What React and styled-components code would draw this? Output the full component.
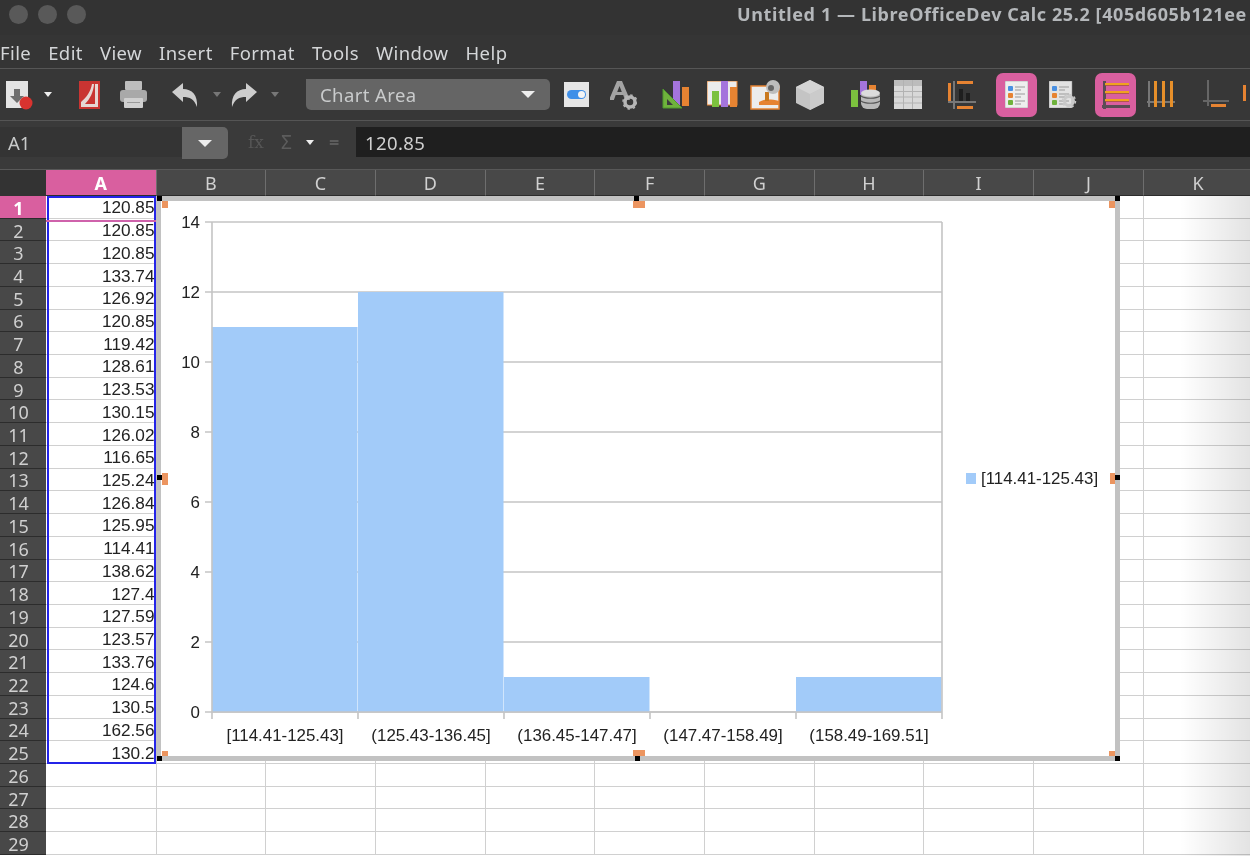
import styled, { createGlobalStyle } from "styled-components";

const GlobalStyle = createGlobalStyle`
  html, body {
    margin: 0;
    padding: 0;
    background: #333;
    overflow: hidden;
  }
`;

const uiFont = `"Noto Sans", "Open Sans", sans-serif`;
const cellFont = `"Liberation Sans", Arial, sans-serif`;

const Page = styled.div`
  width: 1250px;
  height: 856px;
  overflow: hidden;
  background: #363636;
  font-family: ${uiFont};
  filter: blur(0.45px);
`;

const TitleBar = styled.div`
  height: 35px;
  display: flex;
  align-items: flex-start;
  background: #333;
  padding: 5px 0 0 9px;
  box-sizing: border-box;
  gap: 10px;
  white-space: nowrap;
  overflow: hidden;
`;

const WindowDot = styled.span`
  width: 19px;
  height: 19px;
  border-radius: 50%;
  background: #595959;
  flex: none;
`;

const WindowTitle = styled.span`
  margin: -3px 0 0 641px;
  font-size: 18px;
  font-weight: 700;
  letter-spacing: 0.6px;
  color: #b4b7ba;
`;

const MenuBar = styled.div`
  height: 34px;
  box-sizing: border-box;
  display: flex;
  align-items: center;
  gap: 17px;
  padding: 1px 0 0 0;
  background: #353535;
  border-bottom: 1px solid #565656;
`;

const MenuItem = styled.span`
  font-size: 18.5px;
  letter-spacing: 0.4px;
  color: #d4d6d8;
`;

const ToolBar = styled.div`
  height: 52px;
  box-sizing: border-box;
  display: flex;
  align-items: center;
  background: #373737;
  border-bottom: 1px solid #555;
  overflow: hidden;
`;

const ToolIcon = styled.svg`
  flex: none;
  display: block;
  margin-left: ${(p) => p.$ml || 0}px;
`;

const PinkButton = styled.div`
  flex: none;
  width: 41px;
  height: 44px;
  margin-left: ${(p) => p.$ml || 0}px;
  border-radius: 7px;
  background: #d95f9f;
  display: flex;
  align-items: center;
  justify-content: center;
`;

const Caret = styled.span`
  flex: none;
  width: 0;
  height: 0;
  margin-left: ${(p) => p.$ml || 0}px;
  border-left: 4.5px solid transparent;
  border-right: 4.5px solid transparent;
  border-top: 5px solid ${(p) => p.$color || "#eee"};
`;

const Combo = styled.div`
  flex: none;
  width: 244px;
  height: 31px;
  margin-left: ${(p) => p.$ml}px;
  box-sizing: border-box;
  padding: 0 15px 0 14px;
  display: flex;
  align-items: center;
  justify-content: space-between;
  border-radius: 0 5px 5px 5px;
  background: #656565;
  color: #c9cbcc;
  font-size: 18.5px;
  letter-spacing: 0.4px;
`;

const ComboCaret = styled(Caret)`
  border-left-width: 7px;
  border-right-width: 7px;
  border-top-width: 7px;
`;

const FormulaBar = styled.div`
  height: 49px;
  box-sizing: border-box;
  padding-top: 6px;
  display: flex;
  align-items: flex-start;
  background: #3a3a3a;
  border-bottom: 1px solid #585858;
`;

const NameBox = styled.div`
  width: 182px;
  height: 30px;
  box-sizing: border-box;
  padding-left: 8px;
  display: flex;
  align-items: center;
  background: #343434;
  color: #c8caca;
  font-size: 18.5px;
`;

const NameButton = styled.div`
  width: 46px;
  height: 32px;
  display: flex;
  align-items: center;
  justify-content: center;
  background: #666;
  border-radius: 0 5px 5px 0;
`;

const FormulaTools = styled.div`
  width: 128px;
  height: 30px;
  display: flex;
  align-items: center;
  color: #555;
`;

const FxLabel = styled.span`
  margin-left: 20px;
  width: 24px;
  font-family: "DejaVu Serif", serif;
  font-size: 17px;
  color: #565656;
`;

const SigmaLabel = styled.span`
  margin-left: 9px;
  width: 18px;
  font-size: 19px;
  color: #5c5c5c;
`;

const EqualLabel = styled.span`
  margin-left: 15px;
  width: 14px;
  font-size: 18px;
  font-weight: 700;
  color: #5c5c5c;
`;

const FormulaInput = styled.div`
  flex: 1;
  height: 30px;
  box-sizing: border-box;
  padding-left: 9px;
  display: flex;
  align-items: center;
  background: #1f1f1f;
  color: #cfcfcf;
  font-size: 18.5px;
  letter-spacing: 0.4px;
`;

const HeaderRow = styled.div`
  height: 26px;
  display: flex;
  background: #333;
`;

const Corner = styled.div`
  width: 46px;
  flex: none;
`;

const ColHead = styled.div`
  width: ${(p) => (p.$active ? 110.5 : 109.7)}px;
  flex: none;
  box-sizing: border-box;
  padding-top: 1px;
  display: flex;
  align-items: center;
  justify-content: center;
  background: ${(p) => (p.$active ? "#d95f9f" : "#484848")};
  border-right: 1px solid #6e6e6e;
  border-bottom: 1px solid #2c2c2c;
  color: ${(p) => (p.$active ? "#fff" : "#d0d0d0")};
  font-size: 18px;
  font-weight: ${(p) => (p.$active ? 700 : 400)};
`;

const SheetBody = styled.div`
  position: relative;
  height: 660px;
  overflow: hidden;
  background: #fff;
`;

const Row = styled.div`
  height: 22.72px;
  box-sizing: border-box;
  display: flex;
`;

const RowHead = styled.div`
  width: 46px;
  flex: none;
  box-sizing: border-box;
  padding: 2px 9px 0 0;
  display: flex;
  align-items: center;
  justify-content: center;
  background: ${(p) => (p.$active ? "#d95f9f" : "#484848")};
  border-bottom: 1px solid #2c2c2c;
  color: ${(p) => (p.$active ? "#fff" : "#d0d0d0")};
  font-size: 18px;
  font-weight: ${(p) => (p.$active ? 700 : 400)};
`;

const Cell = styled.div`
  width: ${(p) => (p.$first ? 110.5 : 109.7)}px;
  flex: none;
  box-sizing: border-box;
  display: flex;
  align-items: center;
  justify-content: flex-end;
  padding: 2px 1px 0 0;
  background: #fff;
  border-right: 1px solid #d0d0d0;
  border-bottom: 1px solid #d0d0d0;
  color: #222;
  font-family: ${cellFont};
  font-size: 17.2px;
  white-space: nowrap;
`;

const Selection = styled.div`
  position: absolute;
  left: 47px;
  top: 0;
  width: 109px;
  height: 568px;
  box-sizing: border-box;
  border: 2px solid #2424e8;
  pointer-events: none;
`;

const ActiveEdge = styled.div`
  position: absolute;
  left: 46px;
  top: 24px;
  width: 110px;
  height: 2px;
  background: #cf62ab;
`;

const ChartFrame = styled.div`
  position: absolute;
  left: 156px;
  top: 0;
  width: 964px;
  height: 565px;
  box-sizing: border-box;
  border: 5px solid #c2c2c2;
  background: #fff;
`;

const ChartSvg = styled.svg`
  display: block;
  font-family: ${cellFont};
  font-size: 16.9px;
`;

const Handle = styled.span`
  position: absolute;
  left: ${(p) => p.$x}px;
  top: ${(p) => p.$y}px;
  width: ${(p) => p.$w}px;
  height: ${(p) => p.$h}px;
  background: ${(p) => (p.$black ? "#000" : "#ec9560")};
`;

const Vignette = styled.div`
  position: absolute;
  right: 0;
  top: 0;
  width: 70px;
  height: 100%;
  background: linear-gradient(to right, rgba(0, 0, 0, 0), rgba(0, 0, 0, 0.11));
  pointer-events: none;
`;

const columns = ["A", "B", "C", "D", "E", "F", "G", "H", "I", "J", "K"];

const values = [
  "120.85", "120.85", "120.85", "133.74", "126.92", "120.85", "119.42", "128.61", "123.53", "130.15",
  "126.02", "116.65", "125.24", "126.84", "125.95", "114.41", "138.62", "127.4", "127.59", "123.57",
  "133.76", "124.6", "130.5", "162.56", "130.2", "", "", "", "",
];

const yTicks = [0, 2, 4, 6, 8, 10, 12, 14];
const bars = [
  { x: 212, value: 11 },
  { x: 358, value: 12 },
  { x: 504, value: 1 },
  { x: 796, value: 1 },
];
const xLabels = ["[114.41-125.43]", "(125.43-136.45]", "(136.45-147.47]", "(147.47-158.49]", "(158.49-169.51]"];

// [x, y, w, h], y relative to the top of the sheet body
const blackHandles = [
  [157, 0], [634, 0], [1115, 0], [157, 279], [1115, 279], [157, 560], [635, 560], [1115, 560],
];
const orangeHandles = [
  [162, 5, 6, 7], [633, 5, 12, 7], [1109, 5, 6, 7],
  [162, 277, 6, 12], [1110, 277, 5, 11],
  [162, 555, 6, 5], [633, 554, 12, 6], [1109, 555, 6, 5],
];

const NewDocIcon = () => (
  <ToolIcon $ml={6} width="28" height="30" viewBox="0 0 28 30">
    <rect x="0" y="1" width="22" height="27" fill="#e4e4e4" />
    <path d="M8 9h6v7h4l-7 7-7-7h4z" fill="#6e6e6e" />
    <circle cx="20" cy="23" r="6.5" fill="#d9332f" />
  </ToolIcon>
);

const PdfIcon = () => (
  <ToolIcon $ml={27} width="21" height="28" viewBox="0 0 21 28">
    <rect width="21" height="28" fill="#c93432" />
    <path d="M13 3 C12 10 7 17 2 21 L2 26 L19 26 L19 3 L16 3 L16 23 L6 23 C11 18 14.500 11 15 3 Z" fill="#e6d6d4" />
  </ToolIcon>
);

const PrintIcon = () => (
  <ToolIcon $ml={20} width="27" height="28" viewBox="0 0 27 28">
    <rect x="5" y="0" width="17" height="9" rx="1" fill="#bdbdbd" />
    <rect x="0" y="9" width="27" height="12" rx="3" fill="#a9a9a9" />
    <rect x="4" y="17" width="19" height="10" rx="1" fill="#d0d0d0" />
    <rect x="7" y="21" width="13" height="1" fill="#999" />
  </ToolIcon>
);

const UndoIcon = ({ ml, flip }) => (
  <ToolIcon $ml={ml} width="26" height="24" viewBox="0 0 26 24">
    <path
      d="M0 9 L11 0 V6 C20 6 26 12 25 24 C22 16 18 14 11 14 V19 Z"
      fill="#cdcdcd"
      transform={flip ? "matrix(-1 0 0 1 26 0)" : undefined}
    />
  </ToolIcon>
);

const ControlIcon = () => (
  <ToolIcon $ml={14} width="25" height="25" viewBox="0 0 25 25">
    <rect width="25" height="25" fill="#e6e6e6" />
    <rect x="3" y="8" width="19" height="9" rx="4.500" fill="#3f8fe8" />
    <circle cx="17.500" cy="12.500" r="3.500" fill="#f4f4f4" />
  </ToolIcon>
);

const FontGearIcon = () => (
  <ToolIcon $ml={21} width="27" height="30" viewBox="0 0 27 30">
    <path d="M7 1 h5 l8 19 h-5 l-1.800 -5 h-7.500 l-1.800 5 h-5 z M9.500 6 l-2.300 6 h4.600 z" fill="#a3a3a3" fillRule="evenodd" />
    <circle cx="20" cy="22" r="5" fill="none" stroke="#b5b5b5" strokeWidth="3.500" />
    <circle cx="20" cy="22" r="7" fill="none" stroke="#b5b5b5" strokeWidth="1.500" strokeDasharray="2.500 3" />
  </ToolIcon>
);

const ChartTypeIcon = () => (
  <ToolIcon $ml={25} width="28" height="30" viewBox="0 0 28 30">
    <rect x="11" y="1" width="7" height="25" fill="#a474dc" />
    <rect x="20" y="7" width="7" height="19" fill="#e68332" />
    <path d="M1 9 L1 28 L20 28 Z" fill="#6fb23c" stroke="#4f9a2c" />
    <path d="M5 19 L5 25 L11 25 Z" fill="#3c3c3c" />
  </ToolIcon>
);

const DataRangeIcon = () => (
  <ToolIcon $ml={17} width="31" height="27" viewBox="0 0 31 27">
    <rect x="0" y="0" width="30" height="24" fill="#ececec" stroke="#e68332" />
    <rect x="5" y="10" width="7" height="16" fill="#7cc13e" />
    <rect x="14" y="0" width="7" height="26" fill="#a474dc" />
    <rect x="23" y="6" width="7" height="20" fill="#e68332" />
  </ToolIcon>
);

const TitlesIcon = () => (
  <ToolIcon $ml={12} width="31" height="30" viewBox="0 0 31 30">
    <rect x="1" y="6" width="28" height="23" fill="#ececec" stroke="#e68332" strokeWidth="1.500" />
    <path d="M9 22 C14 19 20 19 29 21 V25 H9 Z" fill="#e68332" />
    <rect x="15" y="12" width="4" height="9" fill="#c9791f" />
    <circle cx="23" cy="7" r="7" fill="#bdbdbd" />
    <circle cx="21" cy="8" r="3" fill="#666" />
  </ToolIcon>
);

const CubeIcon = () => (
  <ToolIcon $ml={14} width="30" height="30" viewBox="0 0 30 30">
    <path d="M15 0 L29 7 V23 L15 30 L1 23 V7 Z" fill="#c4c4c4" />
    <path d="M15 0 L29 7 L15 14 L1 7 Z" fill="#d4d4d4" />
    <path d="M15 14 L29 7 V23 L15 30 Z" fill="#cbcbcb" />
  </ToolIcon>
);

const DataTableIcon = () => (
  <ToolIcon $ml={26} width="30" height="29" viewBox="0 0 30 29">
    <rect x="0" y="10" width="7" height="17" fill="#7cc13e" />
    <rect x="9" y="1" width="7" height="14" fill="#a474dc" />
    <rect x="18" y="5" width="7" height="9" fill="#e68332" />
    <rect x="10" y="10" width="19" height="19" rx="6" fill="#b9b9b9" />
    <path d="M10 16 C14 19 25 19 29 16 M10 21 C14 24 25 24 29 21" stroke="#555" strokeWidth="1.200" fill="none" />
    <ellipse cx="19.500" cy="13" rx="9.500" ry="3.500" fill="#dcdcdc" />
  </ToolIcon>
);

const TableIcon = () => (
  <ToolIcon $ml={13} width="28" height="29" viewBox="0 0 28 29">
    <rect width="28" height="29" fill="#d8d8d8" />
    <rect width="28" height="6" fill="#bcbcbc" />
    <path d="M9.500 0V29M18.500 0V29M0 11.500H28M0 17H28M0 23H28" stroke="#b2b2b2" strokeWidth="1" />
  </ToolIcon>
);

const AxesIcon = () => (
  <ToolIcon $ml={26} width="28" height="30" viewBox="0 0 28 30">
    <rect x="0" y="3" width="3" height="18" fill="#e68332" />
    <rect x="9" y="1" width="16" height="3" fill="#e68332" />
    <rect x="9" y="26" width="16" height="3" fill="#e68332" />
    <rect x="5" y="1" width="2" height="28" fill="#777" />
    <rect x="0" y="21" width="28" height="2" fill="#777" />
    <rect x="11" y="9" width="4" height="12" fill="#1f1f1f" />
    <rect x="18" y="13" width="4" height="8" fill="#1f1f1f" />
  </ToolIcon>
);

const LegendIcon = ({ gear }) => (
  <ToolIcon width={gear ? 28 : 23} height="27" viewBox={gear ? "0 0 28 27" : "0 0 23 27"} $ml={gear ? 12 : 0}>
    <rect width="23" height="27" fill={gear ? "#e2e2e2" : "#eeeeee"} stroke="#8a8a8a" strokeWidth="0.500" />
    <rect x="3" y="5" width="5" height="5" rx="1" fill="#4a90e2" />
    <rect x="3" y="12" width="5" height="5" rx="1" fill="#e68332" />
    <rect x="3" y="19" width="5" height="5" rx="1" fill="#6fb23c" />
    <path d="M10 6h10M10 9h6M10 13h10M10 16h6M10 20h10M10 23h6" stroke="#9a9a9a" strokeWidth="1" />
    {gear && (
      <>
        <circle cx="20" cy="20" r="4.500" fill="none" stroke="#c9c9c9" strokeWidth="3" />
        <circle cx="20" cy="20" r="6.500" fill="none" stroke="#c9c9c9" strokeWidth="1.500" strokeDasharray="2.500 2.500" />
      </>
    )}
  </ToolIcon>
);

const HorizontalGridIcon = () => (
  <ToolIcon width="28" height="30" viewBox="0 0 28 30">
    <rect x="1" y="1" width="3" height="28" fill="#5a4c55" />
    <rect x="0" y="25" width="28" height="3" fill="#5a4c55" />
    <path d="M3 4H27M3 12H27M3 20H27" stroke="#f0a21f" strokeWidth="2.200" />
    <path d="M3 5.500H27M3 13.500H27M3 21.500H27" stroke="#a8563a" strokeWidth="0.800" />
  </ToolIcon>
);

const VerticalGridIcon = () => (
  <ToolIcon $ml={11} width="28" height="28" viewBox="0 0 28 28">
    <rect x="0" y="20" width="28" height="2" fill="#777" />
    <rect x="1" y="0" width="2" height="26" fill="#777" />
    <rect x="7" y="0" width="3" height="26" fill="#e68f2a" />
    <rect x="15" y="0" width="3" height="26" fill="#e68f2a" />
    <rect x="23" y="0" width="3" height="26" fill="#e68f2a" />
  </ToolIcon>
);

const AxisLineIcon = () => (
  <ToolIcon $ml={28} width="26" height="30" viewBox="0 0 26 30">
    <rect x="4" y="0" width="2" height="26" fill="#666" />
    <rect x="0" y="20" width="26" height="2" fill="#666" />
    <rect x="8" y="24" width="15" height="3" fill="#e68332" />
  </ToolIcon>
);

const EdgeIcon = () => (
  <ToolIcon $ml={14} width="6" height="24" viewBox="0 0 6 24">
    <rect x="0" y="2" width="3" height="16" fill="#e68332" />
  </ToolIcon>
);

const HistogramChart = () => (
  <ChartSvg width="954" height="555" viewBox="161 201 954 555">
    {yTicks.map((t) => {
      const y = 712 - t * 35;
      return (
        <g key={t}>
          <line x1="205" x2="942" y1={y} y2={y} stroke="#c4c4c4" strokeWidth="1.600" />
          <text x="200" y={y + 6} textAnchor="end" fill="#222">{t}</text>
        </g>
      );
    })}
    {bars.map((b) => (
      <rect key={b.x} x={b.x} y={712 - b.value * 35} width="145.500" height={b.value * 35} fill="#a2cbf9" />
    ))}
    <line x1="212" x2="212" y1="222" y2="719" stroke="#c4c4c4" strokeWidth="1.600" />
    <line x1="942" x2="942" y1="222" y2="719" stroke="#c4c4c4" strokeWidth="1.600" />
    {[358, 504, 650, 796].map((x) => (
      <line key={x} x1={x} x2={x} y1="712" y2="719" stroke="#c4c4c4" strokeWidth="1.600" />
    ))}
    <line x1="212" x2="942" y1="712" y2="712" stroke="#c4c4c4" strokeWidth="1.600" />
    {xLabels.map((label, i) => (
      <text key={label} x={285 + i * 146} y="741" textAnchor="middle" fill="#222">{label}</text>
    ))}
    <rect x="966" y="473" width="10" height="11" fill="#a2cbf9" />
    <text x="981" y="484" fill="#222">{xLabels[0]}</text>
  </ChartSvg>
);

export default function App() {
  return (
    <>
      <GlobalStyle />
      <Page>
        <TitleBar>
          <WindowDot />
          <WindowDot />
          <WindowDot />
          <WindowTitle>Untitled 1 — LibreOfficeDev Calc 25.2 [405d605b121ee</WindowTitle>
        </TitleBar>
        <MenuBar>
          {["File", "Edit", "View", "Insert", "Format", "Tools", "Window", "Help"].map((m) => (
            <MenuItem key={m}>{m}</MenuItem>
          ))}
        </MenuBar>
        <ToolBar>
          <NewDocIcon />
          <Caret $ml={10} />
          <PdfIcon />
          <PrintIcon />
          <UndoIcon ml={25} />
          <Caret $ml={15} $color="#777" />
          <UndoIcon ml={10} flip />
          <Caret $ml={14} $color="#777" />
          <Combo $ml={27}>
            Chart Area
            <ComboCaret />
          </Combo>
          <ControlIcon />
          <FontGearIcon />
          <ChartTypeIcon />
          <DataRangeIcon />
          <TitlesIcon />
          <CubeIcon />
          <DataTableIcon />
          <TableIcon />
          <AxesIcon />
          <PinkButton $ml={20}>
            <LegendIcon />
          </PinkButton>
          <LegendIcon gear />
          <PinkButton $ml={18}>
            <HorizontalGridIcon />
          </PinkButton>
          <VerticalGridIcon />
          <AxisLineIcon />
          <EdgeIcon />
        </ToolBar>
        <FormulaBar>
          <NameBox>A1</NameBox>
          <NameButton>
            <ComboCaret />
          </NameButton>
          <FormulaTools>
            <FxLabel>fx</FxLabel>
            <SigmaLabel>Σ</SigmaLabel>
            <Caret $ml={7} />
            <EqualLabel>=</EqualLabel>
          </FormulaTools>
          <FormulaInput>120.85</FormulaInput>
        </FormulaBar>
        <HeaderRow>
          <Corner />
          {columns.map((c, i) => (
            <ColHead key={c} $active={i === 0}>{c}</ColHead>
          ))}
        </HeaderRow>
        <SheetBody>
          {values.map((v, r) => (
            <Row key={r}>
              <RowHead $active={r === 0}>{r + 1}</RowHead>
              {columns.map((c, i) => (
                <Cell key={c} $first={i === 0}>{i === 0 ? v : ""}</Cell>
              ))}
            </Row>
          ))}
          <Vignette />
          <Selection />
          <ActiveEdge />
          <ChartFrame>
            <HistogramChart />
          </ChartFrame>
          {orangeHandles.map(([x, y, w, h]) => (
            <Handle key={`o${x}-${y}`} $x={x} $y={y} $w={w} $h={h} />
          ))}
          {blackHandles.map(([x, y]) => (
            <Handle key={`b${x}-${y}`} $black $x={x} $y={y} $w={5} $h={5} />
          ))}
        </SheetBody>
      </Page>
    </>
  );
}
